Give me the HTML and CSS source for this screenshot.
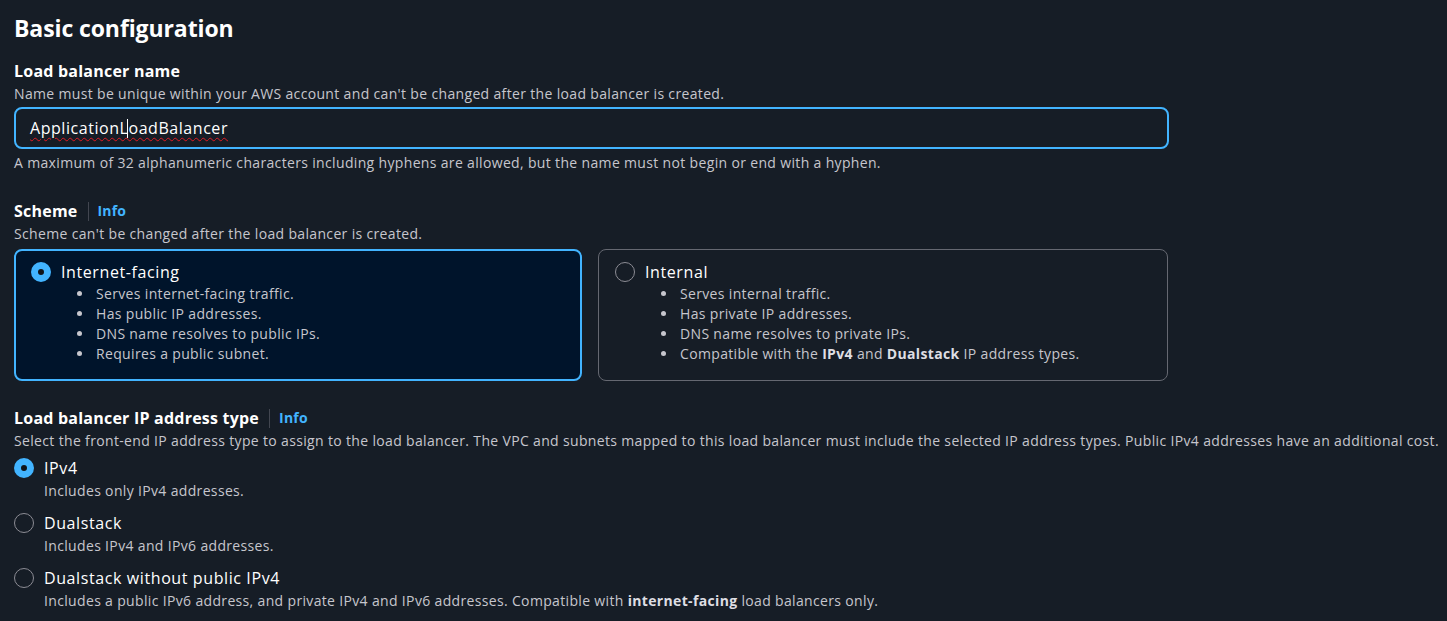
FILE: index.html
```html
<!DOCTYPE html>
<html lang="en">
<head>
<meta charset="utf-8">
<title>Basic configuration</title>
<link rel="stylesheet" href="styles.css">
</head>
<body>
<main class="page">
  <h1 class="title">Basic configuration</h1>

  <section class="field first">
    <div class="label">Load balancer name</div>
    <div class="desc">Name must be unique within your AWS account and can't be changed after the load balancer is created.</div>
    <div class="input"><span class="typed">ApplicationL<span class="caret"></span>oadBalancer</span></div>
    <div class="desc hint">A maximum of 32 alphanumeric characters including hyphens are allowed, but the name must not begin or end with a hyphen.</div>
  </section>

  <section class="field scheme">
    <div class="label-row"><span class="label">Scheme</span><span class="sep"></span><a class="info">Info</a></div>
    <div class="desc">Scheme can't be changed after the load balancer is created.</div>
    <div class="tiles">
      <div class="tile selected">
        <div class="tile-head"><span class="radio checked"></span><span class="tile-title">Internet-facing</span></div>
        <ul class="bullets">
          <li>Serves internet-facing traffic.</li>
          <li>Has public IP addresses.</li>
          <li>DNS name resolves to public IPs.</li>
          <li>Requires a public subnet.</li>
        </ul>
      </div>
      <div class="tile">
        <div class="tile-head"><span class="radio"></span><span class="tile-title">Internal</span></div>
        <ul class="bullets">
          <li>Serves internal traffic.</li>
          <li>Has private IP addresses.</li>
          <li>DNS name resolves to private IPs.</li>
          <li>Compatible with the <b>IPv4</b> and <b>Dualstack</b> IP address types.</li>
        </ul>
      </div>
    </div>
  </section>

  <section class="field iptype">
    <div class="label-row"><span class="label">Load balancer IP address type</span><span class="sep"></span><a class="info">Info</a></div>
    <div class="desc">Select the front-end IP address type to assign to the load balancer. The VPC and subnets mapped to this load balancer must include the selected IP address types. Public IPv4 addresses have an additional cost.</div>
    <div class="options">
      <div class="option">
        <span class="radio checked"></span>
        <div class="option-text">
          <div class="option-label">IPv4</div>
          <div class="desc">Includes only IPv4 addresses.</div>
        </div>
      </div>
      <div class="option">
        <span class="radio"></span>
        <div class="option-text">
          <div class="option-label">Dualstack</div>
          <div class="desc">Includes IPv4 and IPv6 addresses.</div>
        </div>
      </div>
      <div class="option">
        <span class="radio"></span>
        <div class="option-text">
          <div class="option-label">Dualstack without public IPv4</div>
          <div class="desc">Includes a public IPv6 address, and private IPv4 and IPv6 addresses. Compatible with <b>internet-facing</b> load balancers only.</div>
        </div>
      </div>
    </div>
  </section>
</main>
</body>
</html>
```

FILE: styles.css
```css
* { box-sizing: border-box; }
html, body { margin: 0; padding: 0; }
body {
  background: #161d26;
  color: #ffffff;
  font-family: "Open Sans", "Noto Sans", "Liberation Sans", sans-serif;
  font-size: 14px;
  line-height: 20px;
  letter-spacing: 0.34px;
  overflow: hidden;
}
.page {
  padding: 13px 0 0 14px;
  width: 1447px;
}
.title {
  margin: 0;
  font-size: 23px;
  line-height: 30px;
  font-weight: 700;
  letter-spacing: -0.1px;
  color: #ffffff;
}
.field.first { margin-top: 17px; }
.field.scheme { margin-top: 27px; }
.field.iptype { margin-top: 26px; }
.label {
  font-size: 16px;
  line-height: 22px;
  font-weight: 700;
  letter-spacing: 0.22px;
  color: #ffffff;
}
.label-row { display: flex; align-items: center; height: 22px; }
.sep {
  width: 1px;
  height: 19px;
  background: #424650;
  margin: 0 9px 0 10px;
}
.info {
  color: #42b4ff;
  font-weight: 700;
  font-size: 14px;
  letter-spacing: 0.2px;
  cursor: pointer;
}
.desc {
  color: #c6c6cd;
  font-size: 14px;
  line-height: 20px;
  margin-top: 2px;
}
.desc b { color: #dedee3; font-weight: 700; }
.input {
  margin-top: 3px;
  width: 1155px;
  height: 42px;
  border: 2px solid #42b4ff;
  border-radius: 8px;
  padding: 0 14px;
  display: flex;
  align-items: center;
  font-size: 16px;
  letter-spacing: 0.55px;
  color: #ffffff;
}
.typed {
  text-decoration: underline wavy #e01b24;
  text-decoration-thickness: 1px;
  text-underline-offset: 3px;
}
.caret {
  display: inline-block;
  width: 1px;
  height: 19px;
  background: #ffffff;
  vertical-align: -4px;
  margin-left: -1px;
}
.hint { margin-top: 4px; }
.tiles {
  margin-top: 5px;
  width: 1154px;
  display: grid;
  grid-template-columns: 568px 570px;
  gap: 16px;
}
.tile {
  border: 1px solid #656871;
  border-radius: 8px;
  padding: 11px 16px 15px 16px;
  height: 132px;
}
.tile.selected {
  border: 2px solid #42b4ff;
  background: #00142b;
  padding: 10px 15px 14px 15px;
}
.tile-head { display: flex; align-items: center; gap: 10px; }
.tile-title { font-size: 16px; line-height: 22px; letter-spacing: 0.6px; color: #ffffff; }
.radio {
  flex: none;
  width: 20px;
  height: 20px;
  border-radius: 50%;
  border: 1.75px solid #8c8c94;
  display: inline-block;
}
.radio.checked {
  border: 7px solid #42b4ff;
  background: #0f141a;
}
.bullets {
  margin: 1px 0 0 0;
  padding-left: 63px;
  color: #c6c6cd;
  font-size: 14px;
  line-height: 20px;
}
.bullets li { padding-left: 2px; }
.bullets li::marker { color: #c6c6cd; }
.bullets b { color: #dedee3; }
.options { margin-top: 6px; display: flex; flex-direction: column; gap: 11px; }
.option { display: flex; align-items: flex-start; gap: 10px; }
.option .radio { margin-top: 1px; }
.option-label { font-size: 16px; line-height: 22px; letter-spacing: 0.6px; color: #ffffff; }
.option .desc { margin-top: 2px; }
```
